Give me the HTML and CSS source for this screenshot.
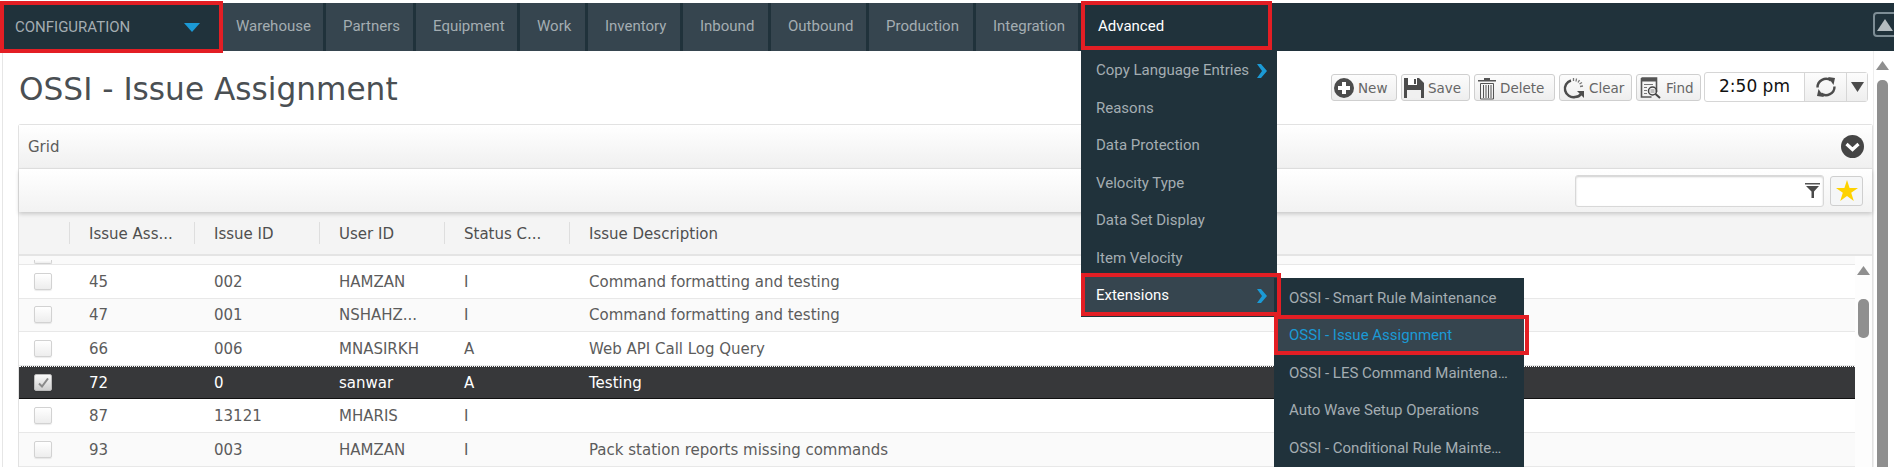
FILE: index.html
```html
<!DOCTYPE html>
<html lang="en">
<head>
<meta charset="utf-8">
<title>OSSI - Issue Assignment</title>
<link rel="stylesheet" href="styles.css">
</head>
<body>
<div class="page">
  <nav class="nav">
    <div class="tab config hl">
      <span>CONFIGURATION</span>
      <svg class="caret" width="16" height="9" viewBox="0 0 16 9"><path d="M0 0h16L8 9z" fill="#1b9ad6"/></svg>
    </div>
    <div class="tabs">
      <div class="tab first">Warehouse</div>
      <div class="tab">Partners</div>
      <div class="tab">Equipment</div>
      <div class="tab">Work</div>
      <div class="tab">Inventory</div>
      <div class="tab">Inbound</div>
      <div class="tab">Outbound</div>
      <div class="tab">Production</div>
      <div class="tab">Integration</div>
    </div>
    <div class="tab advanced hl">
      <span>Advanced</span>
      <ul class="menu">
        <li class="item">Copy Language Entries<svg class="chev" width="11" height="14" viewBox="0 0 11 14"><path d="M1 0h4l6 7-6 7H1l5-7z" fill="#1b9ad6"/></svg></li>
        <li class="item">Reasons</li>
        <li class="item">Data Protection</li>
        <li class="item">Velocity Type</li>
        <li class="item">Data Set Display</li>
        <li class="item">Item Velocity</li>
        <li class="item active hl">Extensions<svg class="chev" width="11" height="14" viewBox="0 0 11 14"><path d="M1 0h4l6 7-6 7H1l5-7z" fill="#1b9ad6"/></svg>
          <ul class="submenu">
            <li class="item">OSSI - Smart Rule Maintenance</li>
            <li class="item current hl">OSSI - Issue Assignment</li>
            <li class="item">OSSI - LES Command Maintenance</li>
            <li class="item">Auto Wave Setup Operations</li>
            <li class="item">OSSI - Conditional Rule Maintenance</li>
          </ul>
        </li>
      </ul>
    </div>
    <div class="collapse"><svg width="16" height="12" viewBox="0 0 16 12"><path d="M8 0l8 12H0z" fill="#b4bcc0"/></svg></div>
  </nav>

  <div class="body">
    <main class="main">
      <header class="titlebar">
        <h1 class="title">OSSI - Issue Assignment</h1>
        <div class="actions">
          <button class="btn btn-new">
            <svg width="20" height="20" viewBox="0 0 20 20"><circle cx="10" cy="10" r="10" fill="#4c4c4c"/><path d="M8 4h4v4h4v4h-4v4H8v-4H4V8h4z" fill="#fff"/></svg>New</button>
          <button class="btn btn-save">
            <svg width="20" height="20" viewBox="0 0 20 20"><path d="M0 0h15l5 5v15H0z" fill="#4c4c4c"/><path d="M4 0h9v7H4z" fill="#fff"/><path d="M10 1h2v5h-2z" fill="#4c4c4c"/><path d="M3 12h14v8H3z" fill="#f0f0f0"/></svg>Save</button>
          <button class="btn btn-delete">
            <svg width="18" height="24" viewBox="0 0 18 24"><path d="M6 2h6v2h6v1.500H0V4h6z" fill="#555"/><path d="M2.500 7.500h13V23h-13z" fill="none" stroke="#555"/><path d="M5.500 9v13M8 9v13M10.500 9v13M13 9v13" stroke="#555"/></svg>Delete</button>
          <button class="btn btn-clear">
            <svg width="22" height="22" viewBox="0 0 22 22"><path d="M8 3.500A8.500 8.500 0 0 0 12 20c3 0 5-1.500 6-3" fill="none" stroke="#4c4c4c" stroke-width="2.500"/><path d="M14 14h7v7z" fill="#4c4c4c"/><path d="M10.500 1v3M13.500 1.500l-.5 3M16.500 3l-1.500 2.500M19 5.500l-2.500 1.500M20 9l-3 .5" stroke="#777" stroke-width="1.300"/></svg>Clear</button>
          <button class="btn btn-find">
            <svg width="22" height="22" viewBox="0 0 22 22"><path d="M1.500 1h15v14M1.500 1v19h10" fill="none" stroke="#555" stroke-width="1.600"/><path d="M1.500 1h15v3.500h-15z" fill="#555"/><path d="M4 7.500h9M4 10.500h3M4 13.500h3M4 16.500h3" stroke="#777"/><circle cx="12.500" cy="14" r="4" fill="none" stroke="#444" stroke-width="1.500"/><path d="M10.500 13h4M10.500 15h4" stroke="#888"/><path d="M15.500 17l4.500 4" stroke="#444" stroke-width="2"/></svg>Find</button>
          <div class="clock">
            <span class="time">2:50 pm</span>
            <span class="refresh"><svg width="22" height="22" viewBox="0 0 22 22"><path d="M2.500 11.500a8.500 8.500 0 0 1 13.500-7M19.500 10.500a8.500 8.500 0 0 1-13.500 7" fill="none" stroke="#4c4c4c" stroke-width="2.400"/><path d="M13 1l7 1-1.500 7zM9 21l-7-1 1.500-7z" fill="#4c4c4c"/></svg></span>
            <span class="drop"><svg width="13" height="10" viewBox="0 0 13 10"><path d="M0 0h13L6.500 10z" fill="#4c4c4c"/></svg></span>
          </div>
        </div>
      </header>

      <section class="panel">
        <div class="panel-head">
          <span>Grid</span>
          <svg width="23" height="23" viewBox="0 0 23 23"><circle cx="11.500" cy="11.500" r="11.500" fill="#454545"/><path d="M5.500 9l6 5.500 6-5.500" fill="none" stroke="#fff" stroke-width="3.200"/></svg>
        </div>
        <div class="toolbar">
          <div class="filter">
            <svg width="15" height="15" viewBox="0 0 15 15"><path d="M0 0h15v1.500H0z" fill="#555"/><path d="M1 3h13L9 8.500V15H6.500V8.500z" fill="#4a4a4a"/></svg>
          </div>
          <button class="star"><svg width="22" height="21" viewBox="0 0 22 21"><path d="M11 0l2.600 7.900H22l-6.800 4.900 2.600 8.200L11 16l-6.800 5 2.600-8.200L0 7.900h8.400z" fill="#fed200"/></svg></button>
        </div>
        <div class="cols">
          <div class="c c0"></div>
          <div class="c">Issue Ass...</div>
          <div class="c">Issue ID</div>
          <div class="c">User ID</div>
          <div class="c">Status C...</div>
          <div class="c wide">Issue Description</div>
        </div>
        <div class="gridbody">
          <div class="rows">
            <div class="peek"><span class="check"></span></div>
            <div class="row"><div class="d d0"><span class="check"></span></div><div class="d">45</div><div class="d">002</div><div class="d">HAMZAN</div><div class="d">I</div><div class="d wide">Command formatting and testing</div></div>
            <div class="row alt"><div class="d d0"><span class="check"></span></div><div class="d">47</div><div class="d">001</div><div class="d">NSHAHZ...</div><div class="d">I</div><div class="d wide">Command formatting and testing</div></div>
            <div class="row"><div class="d d0"><span class="check"></span></div><div class="d">66</div><div class="d">006</div><div class="d">MNASIRKH</div><div class="d">A</div><div class="d wide">Web API Call Log Query</div></div>
            <div class="row selected"><div class="d d0"><span class="check on"><svg width="11" height="10" viewBox="0 0 11 10"><path d="M1 5.500l3 3 6-8" fill="none" stroke="#8a8a8a" stroke-width="2"/></svg></span></div><div class="d">72</div><div class="d">0</div><div class="d">sanwar</div><div class="d">A</div><div class="d wide">Testing</div></div>
            <div class="row"><div class="d d0"><span class="check"></span></div><div class="d">87</div><div class="d">13121</div><div class="d">MHARIS</div><div class="d">I</div><div class="d wide"></div></div>
            <div class="row alt"><div class="d d0"><span class="check"></span></div><div class="d">93</div><div class="d">003</div><div class="d">HAMZAN</div><div class="d">I</div><div class="d wide">Pack station reports missing commands</div></div>
          </div>
          <div class="vscroll inner">
            <svg width="13" height="9" viewBox="0 0 13 9"><path d="M6.500 0L13 9H0z" fill="#8f8f8f"/></svg>
            <div class="thumb"></div>
          </div>
        </div>
      </section>
    </main>
    <aside class="vscroll outer">
      <svg width="13" height="9" viewBox="0 0 13 9"><path d="M6.500 0L13 9H0z" fill="#8f8f8f"/></svg>
      <div class="thumb"></div>
    </aside>
  </div>
</div>
</body>
</html>
```
FILE: styles.css
```css
* { box-sizing: border-box; }
html, body { margin: 0; padding: 0; height: 467px; overflow: hidden; background: #fff; }
.page { width: 1894px; height: 467px; padding-top: 3px; display: flex; flex-direction: column; overflow: hidden; }
ul { list-style: none; margin: 0; padding: 0; }

/* top navigation */
.nav { position: relative; z-index: 5; flex: none; height: 48px; display: flex; background: #20323b; font: 15px/46px Roboto, sans-serif; color: #a4adb2; }
.tabs { display: grid; grid-template-columns: 103px 90px 104px 68px 95px 88px 98px 107px 105px; }
.tab { padding: 0 0 0 17px; background: #36454f; border-right: 3px solid #20323b; white-space: nowrap; }
.first { padding-left: 13px; }
.config { position: relative; width: 223px; padding: 0 15px; background: #20323b; border: 0; display: flex; justify-content: space-between; align-items: center; }
.caret { margin-right: 8px; }
.advanced { position: relative; width: 196px; padding: 0 17px; background: #20323b; border: 0; color: #fff; }
.collapse { position: absolute; right: -6px; top: 9px; width: 27px; height: 25px; border: 2px solid #7d8d95; border-radius: 4px; display: flex; align-items: center; justify-content: center; padding-right: 3px; }

/* red annotation frames */
.hl::after { content: ""; position: absolute; border: 4px solid #e31e24; pointer-events: none; }
.config::after { left: 0; right: 0; top: -2px; bottom: -2px; }
.advanced::after { left: 0; right: 5px; top: -2px; bottom: 8px; height: 41px; }
.active::after { left: -4px; right: -4px; top: -4px; bottom: -1px; }
.current::after { left: 0; right: -5px; top: -2px; bottom: 0; }

/* dropdown menus */
.menu { position: absolute; left: 0; top: 48px; width: 196px; padding: 1px 0 2px; background: #20323b; color: #a4adb2; }
.item { position: relative; height: 37.500px; line-height: 37.500px; padding: 0 15px; white-space: nowrap; display: flex; align-items: center; justify-content: space-between; }
.chev { position: absolute; left: 175px; top: 12px; }
.active { color: #fff; background: #36454f; margin-left: 4px; padding-left: 11px; }
.active .chev { left: 171px; }
.submenu { position: absolute; left: 189px; top: 1px; width: 250px; height: 200px; padding-top: 1.500px; background: #20323b; color: #a4adb2; }
.submenu .item { display: block; overflow: hidden; text-overflow: ellipsis; padding-right: 16px; }
.submenu .current { overflow: visible; background: #36454f; color: #1b9ad6; }

/* page body */
.body { flex: 1; min-height: 0; display: flex; }
.main { flex: 1; min-width: 0; margin-left: 2px; padding-left: 15px; border-left: 1px solid #e6e6e6; }
.titlebar { height: 73px; display: flex; justify-content: space-between; padding-right: 5px; }
.title { margin: 19px 0 0 1px; font: 400 31.200px/38px "DejaVu Sans", sans-serif; color: #4a4f53; }
.actions { display: flex; align-items: flex-start; padding-top: 21px; font: 13.500px "DejaVu Sans", sans-serif; }
.btn { height: 27px; margin: 2px 4px 0 0; padding: 0 3px; display: flex; align-items: center; gap: 4px; border: 1px solid #cfcfcf; border-radius: 3px; background: linear-gradient(#fcfcfc, #eeeeee); font: inherit; color: #666; }
.btn-new { width: 66px; padding-left: 2px; }
.btn-save { width: 69px; padding-left: 2px; }
.btn-delete { width: 81px; }
.btn-clear { width: 73px; }
.btn-find { width: 65px; margin-right: 3px; }
.clock { height: 30px; width: 164px; display: flex; border: 1px solid #d6d6d6; border-radius: 3px; }
.time { width: 99px; text-align: center; font-size: 17px; line-height: 27px; color: #111; }
.refresh { width: 42px; display: flex; align-items: center; justify-content: center; border-left: 1px solid #d6d6d6; background: linear-gradient(#fcfcfc, #eeeeee); }
.drop { flex: 1; display: flex; align-items: center; justify-content: center; border-left: 1px solid #d6d6d6; background: linear-gradient(#fcfcfc, #eeeeee); }

/* grid panel */
.panel { border: 1px solid #e2e2e2; border-bottom: 0; border-radius: 3px 3px 0 0; font: 15px "DejaVu Sans", sans-serif; color: #5c5c5c; }
.panel-head { height: 44px; padding: 0 8px 0 9px; display: flex; align-items: center; justify-content: space-between; border-bottom: 1px solid #e2e2e2; background: linear-gradient(#ffffff, #f0f0f0); }
.toolbar { position: relative; height: 43px; padding-right: 9px; display: flex; align-items: center; justify-content: flex-end; gap: 6px; background: linear-gradient(#ffffff, #f2f2f2); box-shadow: 0 2px 4px rgba(0, 0, 0, .18); }
.filter { width: 249px; height: 32px; padding: 7px 3px 0 0; display: flex; justify-content: flex-end; background: #fff; border: 1px solid #d8d8d8; border-radius: 3px; box-shadow: inset 0 1px 2px rgba(0, 0, 0, .2); }
.star { width: 33px; height: 30px; padding: 0; display: flex; align-items: center; justify-content: center; border: 1px solid #cfcfcf; border-radius: 3px; background: #f5f6f7; }
.cols { height: 44px; padding-top: 10px; display: flex; background: #f4f4f4; border-bottom: 2px solid #e4e4e4; }
.c { width: 125px; height: 22px; padding-left: 19px; line-height: 24px; border-left: 1px solid #dedede; white-space: nowrap; color: #4f4f4f; }
.c0 { width: 50px; padding: 0; border-left: 0; }
.wide { width: auto; flex: 1; }
.gridbody { display: flex; }
.rows { flex: 1; min-width: 0; }
.peek { height: 9px; overflow: hidden; padding-left: 15px; background: #fafafa; border-bottom: 1px solid #e8e8e8; display: flex; align-items: flex-end; }
.peek .check { height: 4px; flex: none; margin: 0; border-top: 0; border-radius: 0 0 2px 2px; }
.row { height: 33.600px; display: flex; align-items: center; background: #fff; border-bottom: 1px solid #e8e8e8; }
.alt { background: #fafafa; }
.selected { background: #37383a; color: #fff; border-top: 1px dotted #fff; border-bottom: 1px solid #111; }
.d { width: 125px; padding: 1px 0 0 20px; white-space: nowrap; }
.d0 { width: 50px; padding: 0 0 0 15px; display: flex; }
.check { width: 18px; height: 17px; display: flex; align-items: center; justify-content: center; border: 1px solid #d2d2d2; border-radius: 2px; background: linear-gradient(#ffffff, #ededed); box-shadow: 0 1px 1px rgba(0, 0, 0, .08); }
.check.on { background: linear-gradient(#fafafa, #cfcfcf); border-color: #bbb; }

/* scrollbars */
.vscroll { flex: none; display: flex; flex-direction: column; align-items: center; }
.inner { width: 17px; background: #fdfdfd; padding-top: 10px; }
.inner .thumb { width: 11px; height: 39px; margin-top: 24px; border-radius: 5px; background: #8f8f8f; }
.outer { width: 21px; padding: 10px 4px 0 0; border-left: 1px solid #eee; }
.outer .thumb { width: 11px; flex: 1; margin-top: 10px; border-radius: 5px 5px 0 0; background: #8f8f8f; }
```
